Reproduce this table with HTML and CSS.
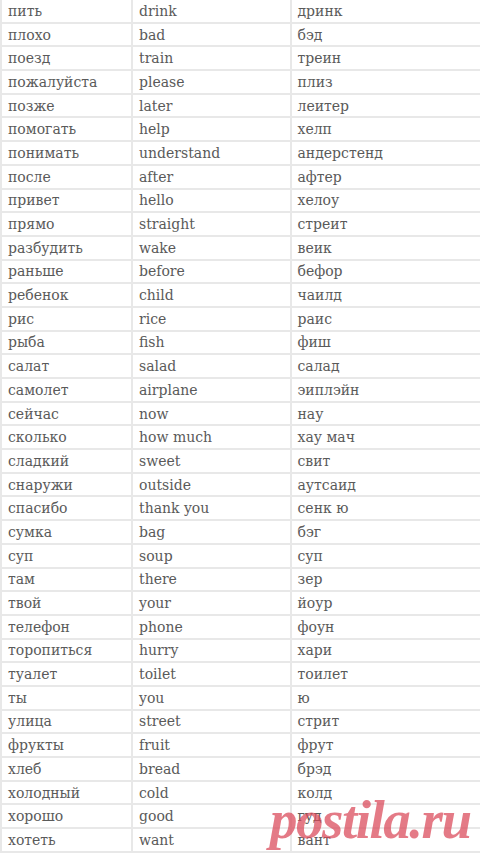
FILE: index.html
```html
<!DOCTYPE html>
<html lang="ru">
<head>
<meta charset="utf-8">
<link rel="stylesheet" href="styles.css">
</head>
<body>
<div class="page">
<table class="words">
<colgroup><col class="c1"><col class="c2"><col class="c3"></colgroup>
<tr><td>пить</td><td>drink</td><td>дринк</td></tr>
<tr><td>плохо</td><td>bad</td><td>бэд</td></tr>
<tr><td>поезд</td><td>train</td><td>треин</td></tr>
<tr><td>пожалуйста</td><td>please</td><td>плиз</td></tr>
<tr><td>позже</td><td>later</td><td>леитер</td></tr>
<tr><td>помогать</td><td>help</td><td>хелп</td></tr>
<tr><td>понимать</td><td>understand</td><td>андерстенд</td></tr>
<tr><td>после</td><td>after</td><td>афтер</td></tr>
<tr><td>привет</td><td>hello</td><td>хелоу</td></tr>
<tr><td>прямо</td><td>straight</td><td>стреит</td></tr>
<tr><td>разбудить</td><td>wake</td><td>веик</td></tr>
<tr><td>раньше</td><td>before</td><td>бефор</td></tr>
<tr><td>ребенок</td><td>child</td><td>чаилд</td></tr>
<tr><td>рис</td><td>rice</td><td>раис</td></tr>
<tr><td>рыба</td><td>fish</td><td>фиш</td></tr>
<tr><td>салат</td><td>salad</td><td>салад</td></tr>
<tr><td>самолет</td><td>airplane</td><td>эиплэйн</td></tr>
<tr><td>сейчас</td><td>now</td><td>нау</td></tr>
<tr><td>сколько</td><td>how much</td><td>хау мач</td></tr>
<tr><td>сладкий</td><td>sweet</td><td>свит</td></tr>
<tr><td>снаружи</td><td>outside</td><td>аутсаид</td></tr>
<tr><td>спасибо</td><td>thank you</td><td>сенк ю</td></tr>
<tr><td>сумка</td><td>bag</td><td>бэг</td></tr>
<tr><td>суп</td><td>soup</td><td>суп</td></tr>
<tr><td>там</td><td>there</td><td>зер</td></tr>
<tr><td>твой</td><td>your</td><td>йоур</td></tr>
<tr><td>телефон</td><td>phone</td><td>фоун</td></tr>
<tr><td>торопиться</td><td>hurry</td><td>хари</td></tr>
<tr><td>туалет</td><td>toilet</td><td>тоилет</td></tr>
<tr><td>ты</td><td>you</td><td>ю</td></tr>
<tr><td>улица</td><td>street</td><td>стрит</td></tr>
<tr><td>фрукты</td><td>fruit</td><td>фрут</td></tr>
<tr><td>хлеб</td><td>bread</td><td>брэд</td></tr>
<tr><td>холодный</td><td>cold</td><td>колд</td></tr>
<tr><td>хорошо</td><td>good</td><td>гуд</td></tr>
<tr><td>хотеть</td><td>want</td><td>вант</td></tr>
</table>
<div class="watermark">postila.ru</div>
</div>
</body>
</html>
```
FILE: styles.css
```css
html, body {
  margin: 0;
  padding: 0;
  background: #ffffff;
}
.page {
  position: relative;
  width: 480px;
  height: 853px;
  overflow: hidden;
}
.words {
  border-collapse: collapse;
  table-layout: fixed;
  width: 490px;
  margin: -2px 0 0 0;
  font-family: "DejaVu Serif", "Liberation Serif", serif;
  font-size: 14px;
  color: #5a5a5a;
}
.c1 { width: 131px; }
.c2 { width: 158.5px; }
.c3 { width: 200.5px; }
.words td {
  border: 2px solid #e8e8e8;
  height: 21.7px;
  padding: 0 0 0 6px;
  line-height: 20px;
  white-space: nowrap;
  vertical-align: middle;
}
.watermark {
  position: absolute;
  left: 270px;
  top: 792px;
  font-family: "Liberation Serif", serif;
  font-style: italic;
  font-weight: bold;
  font-size: 55px;
  letter-spacing: -1.5px;
  color: rgba(218, 70, 88, 0.72);
  line-height: 1;
}
```
